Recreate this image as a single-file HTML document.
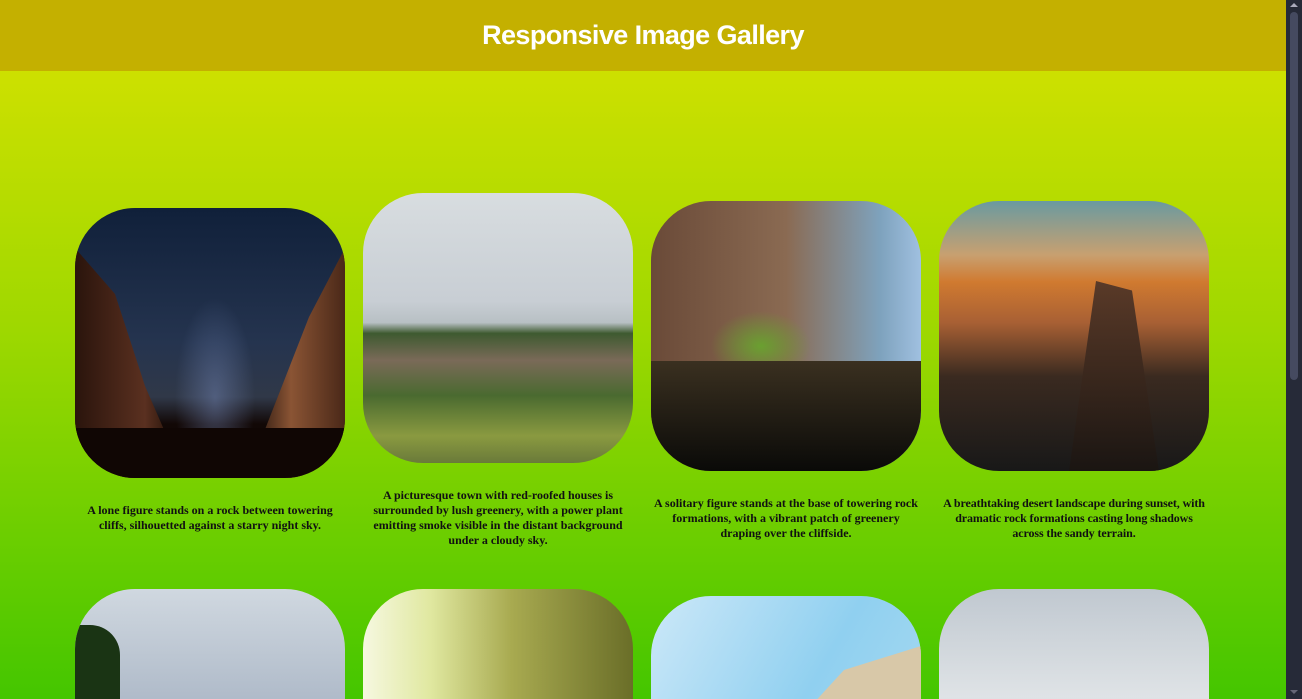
<!DOCTYPE html>
<html><head><meta charset="utf-8"><style>
*{margin:0;padding:0;box-sizing:border-box}
html,body{width:1302px;height:699px;overflow:hidden}
body{position:relative;background:linear-gradient(#cde000 71px,#cde000 71px,#9ed800 330px,#44c600 699px);font-family:"Liberation Serif",serif}
header{position:absolute;left:0;top:0;width:1286px;height:71px;background:#c4b000;color:#fff;text-align:center;font:bold 27px/71px "Liberation Sans",sans-serif;letter-spacing:-0.6px}
.img{position:absolute;width:270px;height:270px;border-radius:60px;overflow:hidden}
.cap{position:absolute;width:270px;padding:0 2px;text-align:center;font-weight:bold;font-size:12px;line-height:15px;color:#111}
.sb{position:absolute;left:1286px;top:0;width:16px;height:699px;background:#262a38}
.th{position:absolute;left:1290px;top:12px;width:8px;height:368px;border-radius:4px;background:#454a60}
</style></head><body>
<header>Responsive Image Gallery</header>

<div class="img" style="left:75px;top:208px;background:
radial-gradient(ellipse 40px 100px at 140px 190px,rgba(120,140,190,.45),transparent),
linear-gradient(#10203a,#25344f 50%,#303848 70%,#120806 80%,#0a0404)"><div style="position:absolute;left:0;top:40px;width:100px;height:230px;background:linear-gradient(90deg,#2a140c,#5a3020 70%,#201008);clip-path:polygon(0 0,40% 20%,70% 60%,100% 90%,100% 100%,0 100%)"></div><div style="position:absolute;right:0;top:40px;width:90px;height:230px;background:linear-gradient(270deg,#4a2818,#8a5434 60%,#2a1810);clip-path:polygon(100% 0,60% 30%,20% 70%,0 90%,0 100%,100% 100%)"></div><div style="position:absolute;left:0;bottom:0;width:270px;height:50px;background:#100604"></div></div>
<div class="cap" style="left:75px;top:503px">A lone figure stands on a rock between towering cliffs, silhouetted against a starry night sky.</div>

<div class="img" style="left:363px;top:193px;background:linear-gradient(#d8dde0,#c8ced4 40%,#b8c0c4 48%,#3e5a30 52%,#7a6a58 62%,#4a6a30 75%,#8a9a40 90%,#6a7a3a)"></div>
<div class="cap" style="left:363px;top:488px">A picturesque town with red-roofed houses is surrounded by lush greenery, with a power plant emitting smoke visible in the distant background under a cloudy sky.</div>

<div class="img" style="left:651px;top:201px;background:
radial-gradient(ellipse 50px 35px at 110px 145px,#6aa030,transparent),
linear-gradient(90deg,#6a4a38 0%,#8a6a52 50%,rgba(140,180,210,.9) 85%,#a0c0e0),
#000"><div style="position:absolute;left:0;bottom:0;width:270px;height:110px;background:linear-gradient(#3a3020,#0a0a08)"></div></div>
<div class="cap" style="left:651px;top:496px">A solitary figure stands at the base of towering rock formations, with a vibrant patch of greenery draping over the cliffside.</div>

<div class="img" style="left:939px;top:201px;background:linear-gradient(#6a9aa0,#c8a070 20%,#d07a30 30%,#a86034 45%,#3a2a20 65%,#181818)"><div style="position:absolute;left:130px;top:80px;width:90px;height:190px;background:linear-gradient(#5a3a28,#1a1512);clip-path:polygon(30% 0,70% 5%,100% 100%,0 100%)"></div></div>
<div class="cap" style="left:939px;top:496px;width:270px;padding:0;letter-spacing:-0.1px">A breathtaking desert landscape during sunset, with dramatic rock formations casting long shadows across the sandy terrain.</div>

<div class="img" style="left:75px;top:589px;background:linear-gradient(#d0d8e0,#a8b4c4 50%,#c0cad4)"><div style="position:absolute;left:0;top:36px;width:45px;height:80px;background:#1a3414;border-radius:0 30px 0 0"></div></div>
<div class="img" style="left:363px;top:589px;background:linear-gradient(90deg,#f6f8e0,#e0e8a0 25%,#a8aa50 55%,#6a6e28)"></div>
<div class="img" style="left:651px;top:596px;background:linear-gradient(120deg,#cce8f8,#90d0f0 50%,#b0ddf0)"><div style="position:absolute;right:0;top:50px;width:110px;height:60px;background:#d8c8a8;clip-path:polygon(100% 0,30% 40%,0 100%,100% 100%)"></div></div>
<div class="img" style="left:939px;top:589px;background:linear-gradient(#c0c8d0,#dfe3e6 40%,#b0b8c0 70%,#d8dee2)"></div>

<div class="sb"></div><div class="th"></div>
<div style="position:absolute;left:1290px;top:3px;width:0;height:0;border-left:4px solid transparent;border-right:4px solid transparent;border-bottom:4px solid #aab"></div>
<div style="position:absolute;left:1290px;top:690px;width:0;height:0;border-left:4px solid transparent;border-right:4px solid transparent;border-top:4px solid #667"></div>
</body></html>
